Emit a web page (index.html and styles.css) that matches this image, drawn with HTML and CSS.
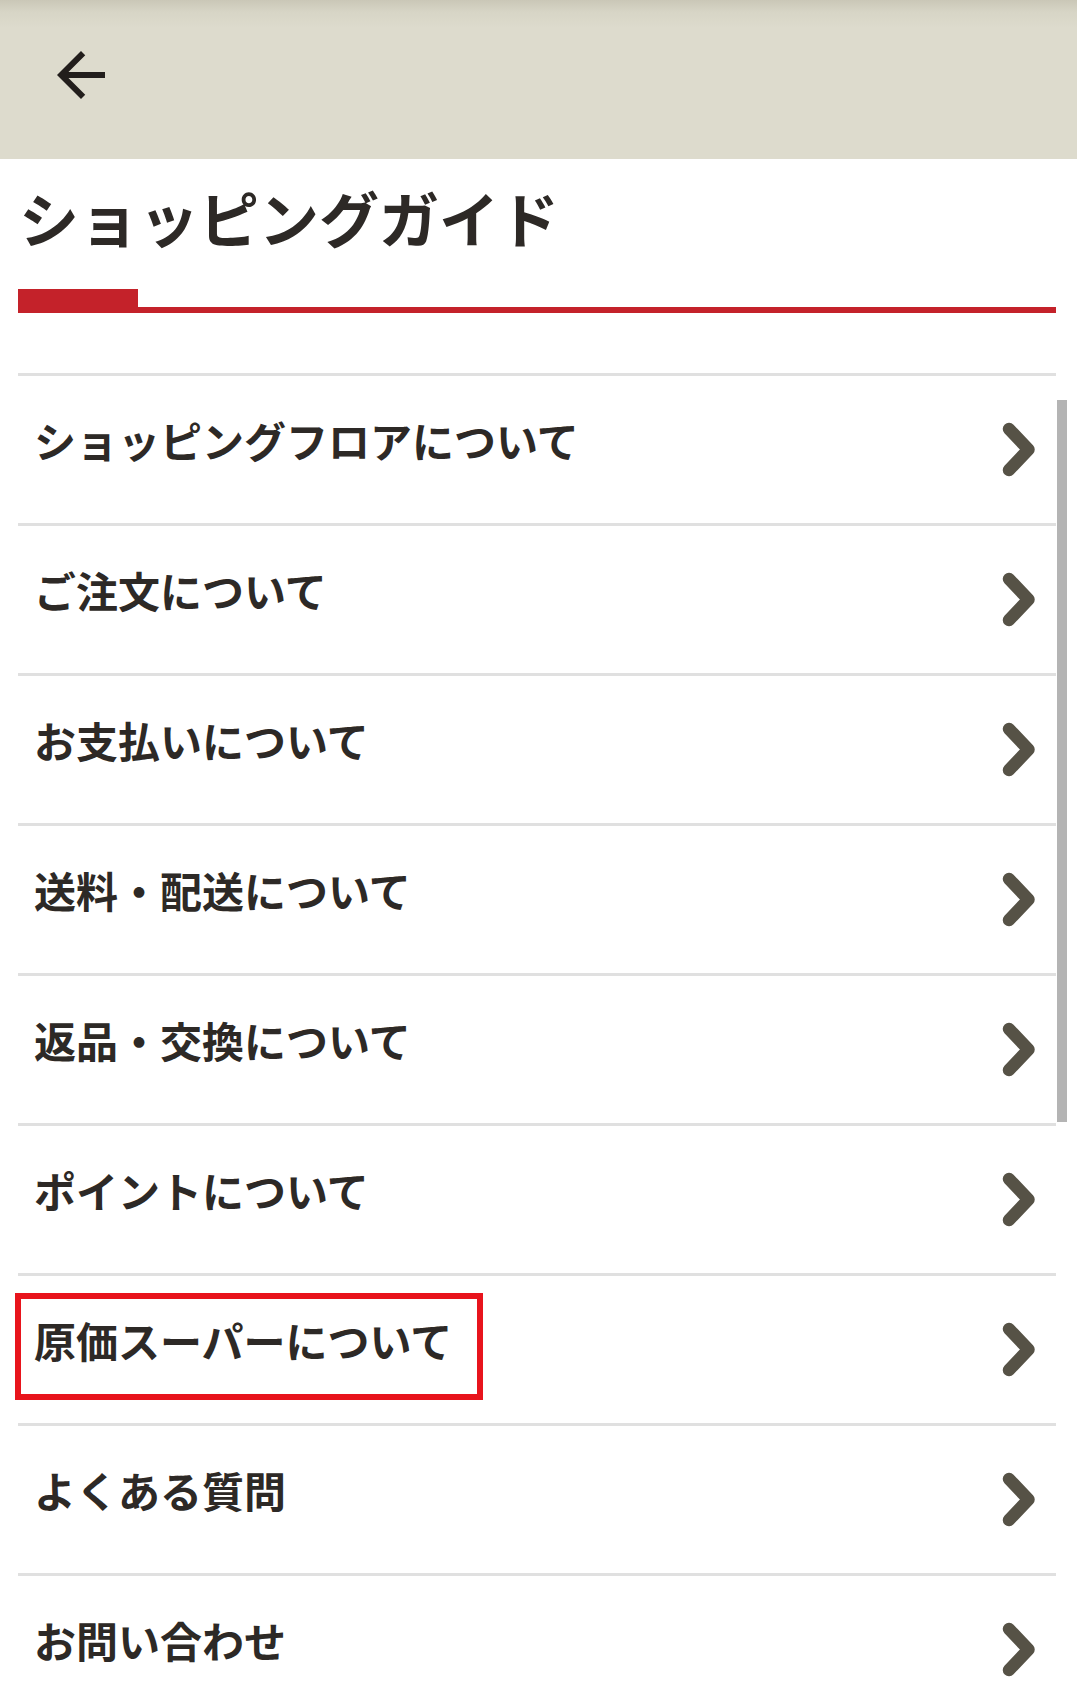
FILE: index.html
```html
<!DOCTYPE html>
<html lang="ja">
<head>
<meta charset="utf-8">
<title>ショッピングガイド</title>
<link rel="stylesheet" href="styles.css">
</head>
<body>
<header class="topbar">
  <a class="back" href="#" aria-label="戻る">
    <svg width="48" height="48" viewBox="4 4 16 16"><path d="M20 11H7.83l5.59-5.59L12 4l-8 8 8 8 1.41-1.41L7.83 13H20v-2z" fill="#221e1c"/></svg>
  </a>
</header>
<main class="page">
  <h1 class="title">ショッピングガイド</h1>
  <div class="title-bar"><span class="accent"></span><span class="line"></span></div>
  <ul class="menu">
    <li><a href="#"><span class="label">ショッピングフロアについて</span><svg class="chev" width="34" height="55" viewBox="0 0 34 55"><path d="M7 7 L26.5 27.5 L7 48" fill="none" stroke="#565246" stroke-width="12.5" stroke-linecap="round" stroke-linejoin="round"/></svg></a></li>
    <li><a href="#"><span class="label">ご注文について</span><svg class="chev" width="34" height="55" viewBox="0 0 34 55"><path d="M7 7 L26.5 27.5 L7 48" fill="none" stroke="#565246" stroke-width="12.5" stroke-linecap="round" stroke-linejoin="round"/></svg></a></li>
    <li><a href="#"><span class="label">お支払いについて</span><svg class="chev" width="34" height="55" viewBox="0 0 34 55"><path d="M7 7 L26.5 27.5 L7 48" fill="none" stroke="#565246" stroke-width="12.5" stroke-linecap="round" stroke-linejoin="round"/></svg></a></li>
    <li><a href="#"><span class="label">送料・配送について</span><svg class="chev" width="34" height="55" viewBox="0 0 34 55"><path d="M7 7 L26.5 27.5 L7 48" fill="none" stroke="#565246" stroke-width="12.5" stroke-linecap="round" stroke-linejoin="round"/></svg></a></li>
    <li><a href="#"><span class="label">返品・交換について</span><svg class="chev" width="34" height="55" viewBox="0 0 34 55"><path d="M7 7 L26.5 27.5 L7 48" fill="none" stroke="#565246" stroke-width="12.5" stroke-linecap="round" stroke-linejoin="round"/></svg></a></li>
    <li><a href="#"><span class="label">ポイントについて</span><svg class="chev" width="34" height="55" viewBox="0 0 34 55"><path d="M7 7 L26.5 27.5 L7 48" fill="none" stroke="#565246" stroke-width="12.5" stroke-linecap="round" stroke-linejoin="round"/></svg></a></li>
    <li class="marked"><a href="#"><span class="label">原価スーパーについて</span><svg class="chev" width="34" height="55" viewBox="0 0 34 55"><path d="M7 7 L26.5 27.5 L7 48" fill="none" stroke="#565246" stroke-width="12.5" stroke-linecap="round" stroke-linejoin="round"/></svg></a><span class="highlight"></span></li>
    <li><a href="#"><span class="label">よくある質問</span><svg class="chev" width="34" height="55" viewBox="0 0 34 55"><path d="M7 7 L26.5 27.5 L7 48" fill="none" stroke="#565246" stroke-width="12.5" stroke-linecap="round" stroke-linejoin="round"/></svg></a></li>
    <li><a href="#"><span class="label">お問い合わせ</span><svg class="chev" width="34" height="55" viewBox="0 0 34 55"><path d="M7 7 L26.5 27.5 L7 48" fill="none" stroke="#565246" stroke-width="12.5" stroke-linecap="round" stroke-linejoin="round"/></svg></a></li>
  </ul>
  <div class="scrollbar"></div>
</main>
</body>
</html>
```

FILE: styles.css
```css
* { box-sizing: border-box; }

html, body {
  margin: 0;
  padding: 0;
  background: #ffffff;
}

body {
  font-family: "Noto Sans CJK JP", "Noto Sans", sans-serif;
  color: #2d2926;
  overflow: hidden;
}

.topbar {
  height: 159px;
  background: linear-gradient(to bottom, #cac7b7 0px, #d7d5c6 12px, #dddbcd 28px, #dddbcd 100%);
  display: flex;
  align-items: flex-start;
  padding: 51px 0 0 57px;
}

.back {
  display: block;
  width: 48px;
  height: 48px;
}

.back svg { display: block; }

.page {
  position: relative;
  padding-top: 28px;
}

.title {
  margin: 0 21px 0 19px;
  font-size: 60px;
  font-weight: 700;
  line-height: 60px;
  letter-spacing: 0;
  color: #2d2926;
}

.title-bar {
  display: flex;
  align-items: flex-end;
  margin: 42px 21px 0 18px;
  height: 24px;
}

.title-bar .accent {
  width: 120px;
  height: 24px;
  background: #c4222a;
}

.title-bar .line {
  flex: 1;
  height: 6px;
  background: #c4222a;
}

.menu {
  list-style: none;
  margin: 60px 21px 0 18px;
  padding: 0;
}

.menu li {
  position: relative;
  border-top: 3px solid #e0e0e0;
  height: 150px;
}

.menu a {
  display: flex;
  align-items: center;
  justify-content: space-between;
  height: 147px;
  padding: 0 20px 0 16px;
  color: #2d2926;
  text-decoration: none;
}

.label {
  font-size: 42px;
  font-weight: 700;
  line-height: 42px;
  margin-bottom: 19px;
}

.chev {
  display: block;
  flex: none;
}

.highlight {
  position: absolute;
  left: -3px;
  top: 17px;
  width: 468px;
  height: 107px;
  border: 6px solid #e8141c;
  pointer-events: none;
}

.scrollbar {
  position: absolute;
  left: 1057px;
  top: 241px;
  width: 10px;
  height: 722px;
  background: #b4b4b4;
}
```
